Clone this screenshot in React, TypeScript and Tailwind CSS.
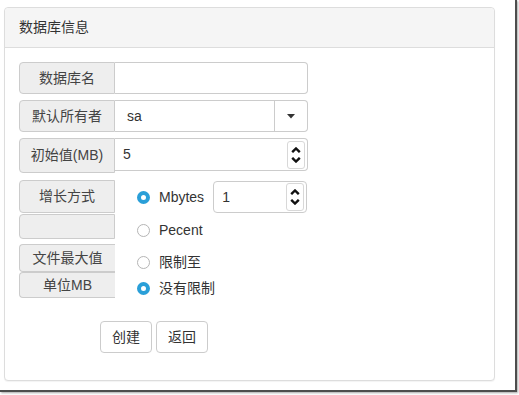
import React from 'react'

function Addon({ children, className = '' }: { children?: React.ReactNode; className?: string }) {
  return (
    <div
      className={`flex items-center justify-center w-[96px] shrink-0 bg-[#eee] border border-[#ccc] rounded-l-[4px] text-[#444] ${className}`}
    >
      {children}
    </div>
  )
}

function Radio({ checked }: { checked?: boolean }) {
  return checked ? (
    <span className="block w-[13px] h-[13px] rounded-full border-[4px] border-[#2a9fd8] bg-white" />
  ) : (
    <span className="block w-[13px] h-[13px] rounded-full border border-[#b5b5b5] bg-white" />
  )
}

function Spinner() {
  return (
    <div className="flex flex-col items-center justify-center gap-[4px] w-[18px] h-[28px] border border-[#d8d8d8] rounded-[3px] bg-white">
      <svg width="10" height="6" viewBox="0 0 10 6">
        <path d="M1.2 5.2 L5 1.5 L8.8 5.2" stroke="#111" strokeWidth="2.4" fill="none" />
      </svg>
      <svg width="10" height="6" viewBox="0 0 10 6">
        <path d="M1.2 0.8 L5 4.5 L8.8 0.8" stroke="#111" strokeWidth="2.4" fill="none" />
      </svg>
    </div>
  )
}

function RadioRow({ checked, label }: { checked?: boolean; label: string }) {
  return (
    <div className="flex items-center gap-[9px] h-[26px]">
      <Radio checked={checked} />
      <span className="text-[#333]">{label}</span>
    </div>
  )
}

export default function App() {
  return (
    <div className="w-[519px] h-[395px] bg-white font-['Liberation_Sans','Noto_Sans_CJK_SC',sans-serif] text-[14px]">
      <div className="w-[517px] h-[392px] border-r-2 border-b-2 border-[#4d4d4d] shadow-[1px_1px_2px_rgba(0,0,0,0.35)] pt-[7px] pl-[4px]">
        {/* 面板 */}
        <div className="w-[491px] h-[374px] border border-[#ddd] rounded-[4px] bg-white shadow-[0_1px_1px_rgba(0,0,0,0.05)]">
          <div className="h-[40px] flex items-center px-[14px] bg-[#f5f5f5] border-b border-[#ddd] rounded-t-[4px] text-[#333]">
            数据库信息
          </div>

          <div className="pt-[14px] pl-[14px]">
            {/* 数据库名 */}
            <div className="flex h-[32px]">
              <Addon>数据库名</Addon>
              <div className="w-[193px] border border-l-0 border-[#ccc] rounded-r-[4px]" />
            </div>

            {/* 默认所有者 */}
            <div className="flex h-[32px] mt-[6px]">
              <Addon>默认所有者</Addon>
              <div className="w-[160px] border border-l-0 border-[#ccc] flex items-center pl-[12px] text-[#333]">sa</div>
              <div className="w-[33px] border border-l-0 border-[#ccc] rounded-r-[4px] flex items-center justify-center">
                <svg width="8" height="5" viewBox="0 0 8 5">
                  <path d="M0 0 L8 0 L4 4.5 Z" fill="#333" />
                </svg>
              </div>
            </div>

            {/* 初始值 */}
            <div className="flex mt-[6px]">
              <Addon className="h-[35px]">初始值(MB)</Addon>
              <div className="w-[193px] h-[33px] border border-l-0 border-[#ccc] rounded-r-[4px] flex items-center justify-between pl-[8px] pr-[2px] text-[#333]">
                <span>5</span>
                <Spinner />
              </div>
            </div>

            {/* 增长方式 + 文件最大值 */}
            <div className="flex mt-[7px]">
              <div className="flex flex-col">
                <Addon className="h-[33px]">增长方式</Addon>
                <Addon className="h-[25px] mt-[1px]" />
                <Addon className="h-[28px] mt-[5px] border-r-0">文件最大值</Addon>
                <Addon className="h-[26px] border-r-0">单位MB</Addon>
              </div>

              <div className="flex flex-col pl-[22px] pt-[1px]">
                <div className="flex items-center gap-[9px] h-[32px]">
                  <Radio checked />
                  <span className="text-[#333]">Mbytes</span>
                  <div className="w-[94px] h-[32px] border border-[#ccc] rounded-[4px] flex items-center justify-between pl-[8px] pr-[2px] text-[#333]">
                    <span>1</span>
                    <Spinner />
                  </div>
                </div>
                <div className="mt-[4px]">
                  <RadioRow label="Pecent" />
                </div>
                <div className="mt-[6px]">
                  <RadioRow label="限制至" />
                </div>
                <RadioRow checked label="没有限制" />
              </div>
            </div>

            {/* 按钮 */}
            <div className="flex gap-[4px] mt-[20px] pl-[81px]">
              <button className="w-[52px] h-[32px] border border-[#ccc] rounded-[4px] bg-white text-[#333]">创建</button>
              <button className="w-[52px] h-[32px] border border-[#ccc] rounded-[4px] bg-white text-[#333]">返回</button>
            </div>
          </div>
        </div>
      </div>
    </div>
  )
}
